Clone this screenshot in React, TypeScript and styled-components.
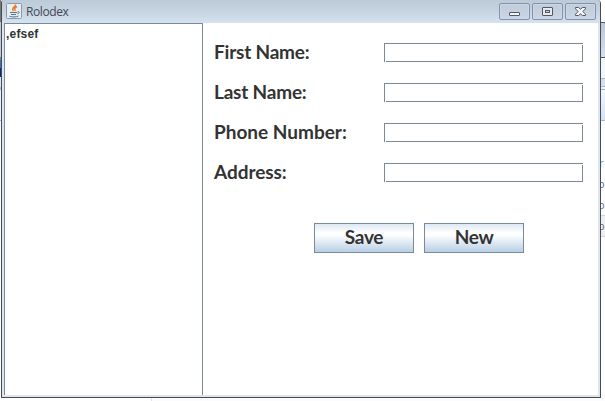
import React from "react";
import styled, { createGlobalStyle, css } from "styled-components";

const GlobalStyle = createGlobalStyle`
  * { box-sizing: border-box; }
  body { margin: 0; overflow: hidden; background: #fff; }
`;

const Desktop = styled.div`
  display: grid;
  grid-template-columns: 1px 600px 4px;
  grid-template-rows: 398px 3px;
  width: 605px;
  height: 401px;
  overflow: hidden;
  background: #fcfcfd;
`;

const LeftEdge = styled.div`
  background: linear-gradient(#777 0 22px, #c0cad6 22px 57px, #7d8390 57px 60px, #3f70bd 60px 68px,
    #052b7d 68px 77px, #dbe6f2 77px 87px, #b6bdc8 87px 90px, #e8f2fc 90px 120px, #a8b7ca 120px 121px, #fafbfd 121px);
`;

const RightEdge = styled.div`
  display: flex;
  flex-direction: column;
  overflow: hidden;
  font: 11px/21px "Open Sans", sans-serif;
  padding-top: 152px;
  background: linear-gradient(#fff 0 22px, #555 22px 23px, #b9c8da 23px, #d3dfec 57px, #555 57px 58px,
    #f5f6f9 58px 78px, #b2b8c5 78px 79px, #d3e0ee 79px 86px, #b2b8c5 86px 87px, #eef2f7 87px 89px,
    #a5afc0 89px 90px, #eff8ff 90px, #d5e1f3 120px, #a7b5cd 120px 121px, #fcfcfd 121px 215px,
    #d4d4d4 215px 216px, #eeeeef 216px 236px, #d4d4d4 236px 237px, #fcfcfd 237px);
`;

const EdgeText = styled.span<{ $blue?: boolean }>`
  height: 21px;
  margin-left: ${(p) => (p.$blue ? -2 : -3)}px;
  color: ${(p) => (p.$blue ? "#3ca5df" : "#74686a")};
`;

const Window = styled.main`
  display: flex;
  flex-direction: column;
  border: 1px solid #484b50;
  border-top: 0;
  border-radius: 3px 4px 0 0;
  background: #dce5f0;
  overflow: hidden;
`;

const TitleBar = styled.header`
  display: flex;
  height: 23px;
  flex: none;
  padding: 3px 4px 0;
  background: linear-gradient(#bdcad8, #c5d2df 45%, #d5e2f0);
`;

const Title = styled.h1`
  flex: 1;
  margin: 0 0 0 4px;
  font: 400 12px/18px "Open Sans", sans-serif;
  letter-spacing: -0.4px;
  color: #3f4956;
`;

const WindowButtons = styled.div`
  display: flex;
  gap: 2px;
`;

const WindowButton = styled.button`
  display: grid;
  place-items: center;
  width: 31px;
  height: 17px;
  padding: 0;
  border: 1px solid #8491aa;
  border-radius: 2px;
  background: linear-gradient(#c0ccda, #c9d5e2);
  box-shadow: inset 0 0 0 1px #ccd8e5;
`;

const Content = styled.div`
  display: flex;
  flex: 1;
  margin: 0 2px 2px;
  background: #fff;
`;

const metalBorder = css`
  border: 0;
  background:
    linear-gradient(#7a8a99, #7a8a99) 0 0 / 100% 1px no-repeat,
    linear-gradient(#7a8a99, #7a8a99) 0 0 / 1px 100% no-repeat,
    linear-gradient(#7a8a99, #7a8a99) 100% 0 / 1px 100% no-repeat,
    #fff;
`;

const ContactList = styled.ul`
  width: 199px;
  margin: 0;
  padding: 4px 2px;
  list-style: none;
  ${metalBorder}
`;

const Contact = styled.li`
  font: 700 12px/15px "Liberation Sans", Arial, sans-serif;
  letter-spacing: 0.2px;
  color: #333;
`;

const Form = styled.form`
  flex: 1;
  padding: 9px 15px 0 11px;
`;

const Field = styled.label`
  display: flex;
  align-items: center;
  justify-content: space-between;
  height: 40px;
`;

const LabelText = styled.span<{ $spacing: number }>`
  font: 700 19px/24px Lato, sans-serif;
  letter-spacing: ${(p) => p.$spacing}px;
  color: #333;
  white-space: nowrap;
`;

const Input = styled.input`
  width: 199px;
  height: 19px;
  margin: 1px 0 0;
  padding: 0 3px;
  border: 0;
  border-radius: 0;
  outline: 0;
  background:
    linear-gradient(#7a8a99, #7a8a99) 0 0 / 100% 1px no-repeat,
    linear-gradient(#7a8a99, #7a8a99) 0 0 / 1px 100% no-repeat,
    linear-gradient(transparent 2px, #7a8a99 2px) 100% 0 / 1px 100% no-repeat,
    linear-gradient(90deg, transparent 2px, #7a8a99 2px) 0 100% / 100% 1px no-repeat,
    #fff;
`;

const Actions = styled.div`
  display: flex;
  gap: 10px;
  padding: 31px 0 0 100px;
`;

const ActionButton = styled.button`
  width: 100px;
  height: 30px;
  padding: 0 0 2px;
  border: 1px solid #7a8a99;
  border-radius: 0;
  background: linear-gradient(#dde8f3, #fff 32%, #fff 38%, #b8cfe5);
  font: 700 19px/24px Lato, sans-serif;
  letter-spacing: -0.3px;
  color: #333;
`;

const BottomEdge = styled.div`
  grid-column: 1 / -1;
  background: linear-gradient(90deg, #fff 151px, #d9e4ef 151px 152px, #fcfcfd 152px);
`;

const JavaIcon = () => (
  <svg width="16" height="16" viewBox="0 0 16 16">
    <rect x=".5" y=".5" width="15" height="15" rx="1" fill="#e8edf1" stroke="#8b9aaa" />
    <path d="M9.5 1.5C10 4 5 4.3 7.2 8M11 3.5C8.5 4.7 8.5 5.5 9.2 8" fill="none" stroke="#e87922" strokeWidth="1.4" />
    <path d="M4 9.5h7M5 11.5h5M3.5 13.2c2 1 7 1 9-.2M11.5 9c2-1 2.5 1 0 2" fill="none" stroke="#507391" />
  </svg>
);

const fields = [
  { label: "First Name:", spacing: -0.2 },
  { label: "Last Name:", spacing: -0.2 },
  { label: "Phone Number:", spacing: 0 },
  { label: "Address:", spacing: -0.05 },
];

export default function App() {
  return (
    <>
      <GlobalStyle />
      <Desktop>
        <LeftEdge />
        <Window>
          <TitleBar>
            <JavaIcon />
            <Title>Rolodex</Title>
            <WindowButtons>
              <WindowButton type="button" aria-label="Minimize">
                <svg width="11" height="11" viewBox="0 0 11 11">
                  <rect x=".5" y="6.5" width="10" height="3" rx=".5" fill="#f5f5f5" stroke="#535666" />
                </svg>
              </WindowButton>
              <WindowButton type="button" aria-label="Maximize">
                <svg width="11" height="9" viewBox="0 0 11 9">
                  <rect x=".5" y=".5" width="10" height="8" rx=".5" fill="#e8e9eb" stroke="#535666" />
                  <rect x="3.5" y="3.5" width="4" height="2" fill="#c5d2df" stroke="#535666" />
                </svg>
              </WindowButton>
              <WindowButton type="button" aria-label="Close">
                <svg width="11" height="9" viewBox="0 0 11 9">
                  <path d="M.5.5h3l2 1.7 2-1.7h3v1.3L7.8 4.5l2.7 2.7v1.3h-3l-2-1.7-2 1.7h-3V7.2l2.7-2.7L.5 1.8z" fill="#f5f5f5" stroke="#535666" />
                </svg>
              </WindowButton>
            </WindowButtons>
          </TitleBar>
          <Content>
            <ContactList>
              <Contact>,efsef</Contact>
            </ContactList>
            <Form>
              {fields.map((f) => (
                <Field key={f.label}>
                  <LabelText $spacing={f.spacing}>{f.label}</LabelText>
                  <Input type="text" />
                </Field>
              ))}
              <Actions>
                <ActionButton type="button">Save</ActionButton>
                <ActionButton type="button">New</ActionButton>
              </Actions>
            </Form>
          </Content>
        </Window>
        <RightEdge>
          <EdgeText $blue>r</EdgeText>
          <EdgeText>o</EdgeText>
          <EdgeText>o</EdgeText>
          <EdgeText>o</EdgeText>
        </RightEdge>
        <BottomEdge />
      </Desktop>
    </>
  );
}
